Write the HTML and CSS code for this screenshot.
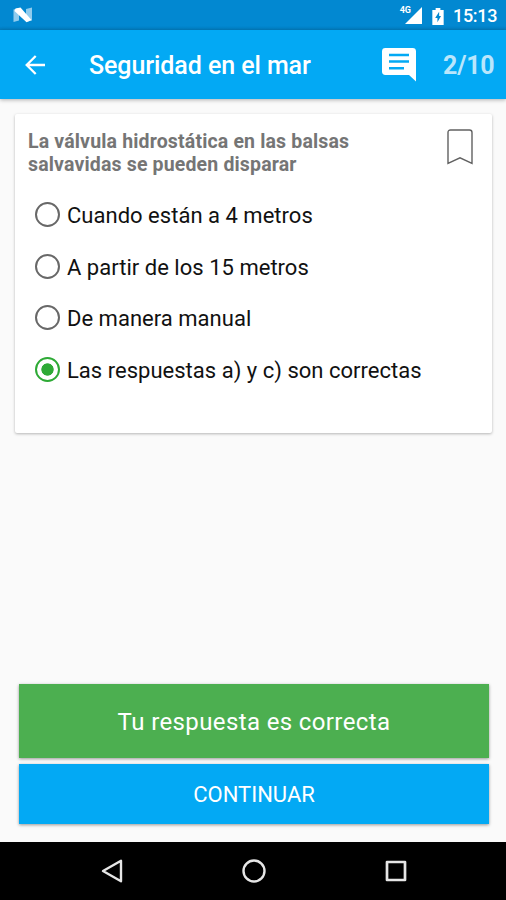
FILE: index.html
```html
<!DOCTYPE html>
<html lang="es">
<head>
<meta charset="utf-8">
<title>Seguridad en el mar</title>
<link rel="stylesheet" href="styles.css">
</head>
<body>
<div class="screen">
  <div class="status">
    <svg class="n-logo" width="20" height="16" viewBox="0 0 20 16"><path d="M.5 2.500L6 1V13.500L.5 15Z" fill="#8fcbed"/><path d="M13 2L19 .5V13.500L13 15Z" fill="#8fcbed"/><path d="M2.500 1.500L7.500 .5L18.500 13L13.500 15.300L1.500 4Z" fill="#fff"/></svg>
    <div class="status-icons">
      <span class="net">4G</span>
      <svg class="signal" width="17" height="17" viewBox="0 0 18 18"><path d="M18 0V18H0Z" fill="#fff"/></svg>
      <svg class="battery" width="12" height="17" viewBox="0 0 12 18"><path d="M3.500 0H8.500V2H12V18H0V2H3.500Z" fill="#fff"/><path d="M7.200 4L3 10.500H5.400V15L9.200 8.500H7.200Z" fill="#0288d1"/></svg>
      <span class="clock">15:13</span>
    </div>
  </div>
  <header class="bar">
    <svg class="back" width="20" height="20" viewBox="0 0 20 20" fill="none" stroke="#fff" stroke-width="2.300"><path d="M20 10H2M10.700 1L1.700 10L10.700 19"/></svg>
    <h1 class="title">Seguridad en el mar</h1>
    <svg class="comment" width="34" height="34" viewBox="0 0 34 34"><path d="M3.400 0H30.600Q34 0 34 3.400V33.500L27 27H3.400Q0 27 0 23.600V3.400Q0 0 3.400 0Z" fill="#fff"/><path d="M7 7H27M7 13.500H27M7 20.200H22" stroke="#03a9f4" stroke-width="2.600"/></svg>
    <span class="count">2/10</span>
  </header>
  <main class="content">
    <section class="card">
      <div class="question">
        <p class="q-text">La válvula hidrostática en las balsas<br>salvavidas se pueden disparar</p>
        <svg class="bookmark" width="26" height="36" viewBox="0 0 26 36" fill="none" stroke="#616161" stroke-width="1.400"><path d="M3.500 1H22.500Q25 1 25 3.500V34.300L13 28.800L1 34.300V3.500Q1 1 3.500 1Z"/></svg>
      </div>
      <ul class="options">
        <li class="option"><span class="radio"></span><span class="label">Cuando están a 4 metros</span></li>
        <li class="option"><span class="radio"></span><span class="label">A partir de los 15 metros</span></li>
        <li class="option"><span class="radio"></span><span class="label">De manera manual</span></li>
        <li class="option"><span class="radio on"></span><span class="label">Las respuestas a) y c) son correctas</span></li>
      </ul>
    </section>
    <div class="actions">
      <div class="result">Tu respuesta es correcta</div>
      <div class="next">CONTINUAR</div>
    </div>
  </main>
  <nav class="nav">
    <svg width="22" height="24" viewBox="0 0 22 24" fill="none" stroke="#e6e6e6" stroke-width="2.400" stroke-linejoin="round"><path d="M20 1.800V22.200L2 12Z"/></svg>
    <svg width="24" height="24" viewBox="0 0 24 24" fill="none" stroke="#e6e6e6" stroke-width="2.400"><circle cx="12" cy="12" r="10.500"/></svg>
    <svg width="22" height="22" viewBox="0 0 22 22" fill="none" stroke="#e6e6e6" stroke-width="2.700" stroke-linejoin="round"><rect x="2" y="2" width="18" height="18"/></svg>
  </nav>
</div>
</body>
</html>
```
FILE: styles.css
```css
* { box-sizing: border-box; margin: 0; padding: 0; }
body { font-family: Roboto, "Liberation Sans", sans-serif; background: #fafafa; }
svg { display: block; flex: none; }
.screen { width: 506px; height: 900px; display: flex; flex-direction: column; overflow: hidden; white-space: nowrap; }
.status { height: 30px; flex: none; background: linear-gradient(#0288d1 26px, #027dc0); display: flex; justify-content: space-between; padding: 7px 9px 0 13px; }
.status-icons { display: flex; color: #fff; }
.net { font-size: 9px; font-weight: 700; line-height: 9px; margin-top: -1px; margin-right: -6px; }
.signal { margin-right: 10px; }
.battery { margin-top: 1px; margin-right: 9px; }
.clock { font-size: 18px; font-weight: 500; line-height: 18px; width: 44px; letter-spacing: -.3px; }
.bar { height: 69px; flex: none; background: #03a9f4; color: #fff; display: flex; align-items: flex-start; padding: 0 11px 0 25px; box-shadow: 0 1px 4px rgba(0,0,0,.3); z-index: 1; }
.back { margin-top: 25px; }
.title { font-size: 25px; font-weight: 500; line-height: 30px; letter-spacing: -.08px; margin: 21px 0 0 44px; width: 293px; }
.comment { margin-top: 18px; }
.count { font-size: 25px; font-weight: 700; line-height: 30px; letter-spacing: -.2px; margin: 21px 0 0 27px; color: #b9e6fc; }
.content { flex: 1; display: flex; flex-direction: column; justify-content: space-between; padding: 15px 14px 18px 15px; }
.card { height: 319px; background: #fff; border-radius: 2px; box-shadow: 0 1px 3px rgba(0,0,0,.28); }
.question { height: 75px; display: flex; justify-content: space-between; padding: 15px 19px 0 13px; }
.q-text { font-size: 19.5px; font-weight: 700; line-height: 23px; letter-spacing: .16px; color: #757575; margin-top: 1px; }
.options { list-style: none; }
.option { height: 51.6px; display: flex; align-items: center; font-size: 22px; color: #111; padding-left: 20px; gap: 7px; }
.label { padding-top: 2px; letter-spacing: .02px; }
.radio { width: 25px; height: 25px; flex: none; border: 2px solid #686868; border-radius: 50%; }
.radio.on { border-color: #2eaa36; background: radial-gradient(circle, #2eaa36 5.800px, #fff 6.500px); }
.actions { display: flex; flex-direction: column; gap: 6px; padding: 0 3px 0 4px; color: #fff; }
.result, .next { display: flex; align-items: center; justify-content: center; box-shadow: 0 1px 3px rgba(0,0,0,.4); }
.result { height: 74px; background: #4caf50; font-size: 24px; letter-spacing: .38px; padding-top: 1px; }
.next { height: 60px; background: #03a9f4; font-size: 22px; }
.nav { height: 58px; flex: none; background: #000; display: flex; align-items: center; justify-content: space-between; padding: 0 99px 0 101px; }
```
